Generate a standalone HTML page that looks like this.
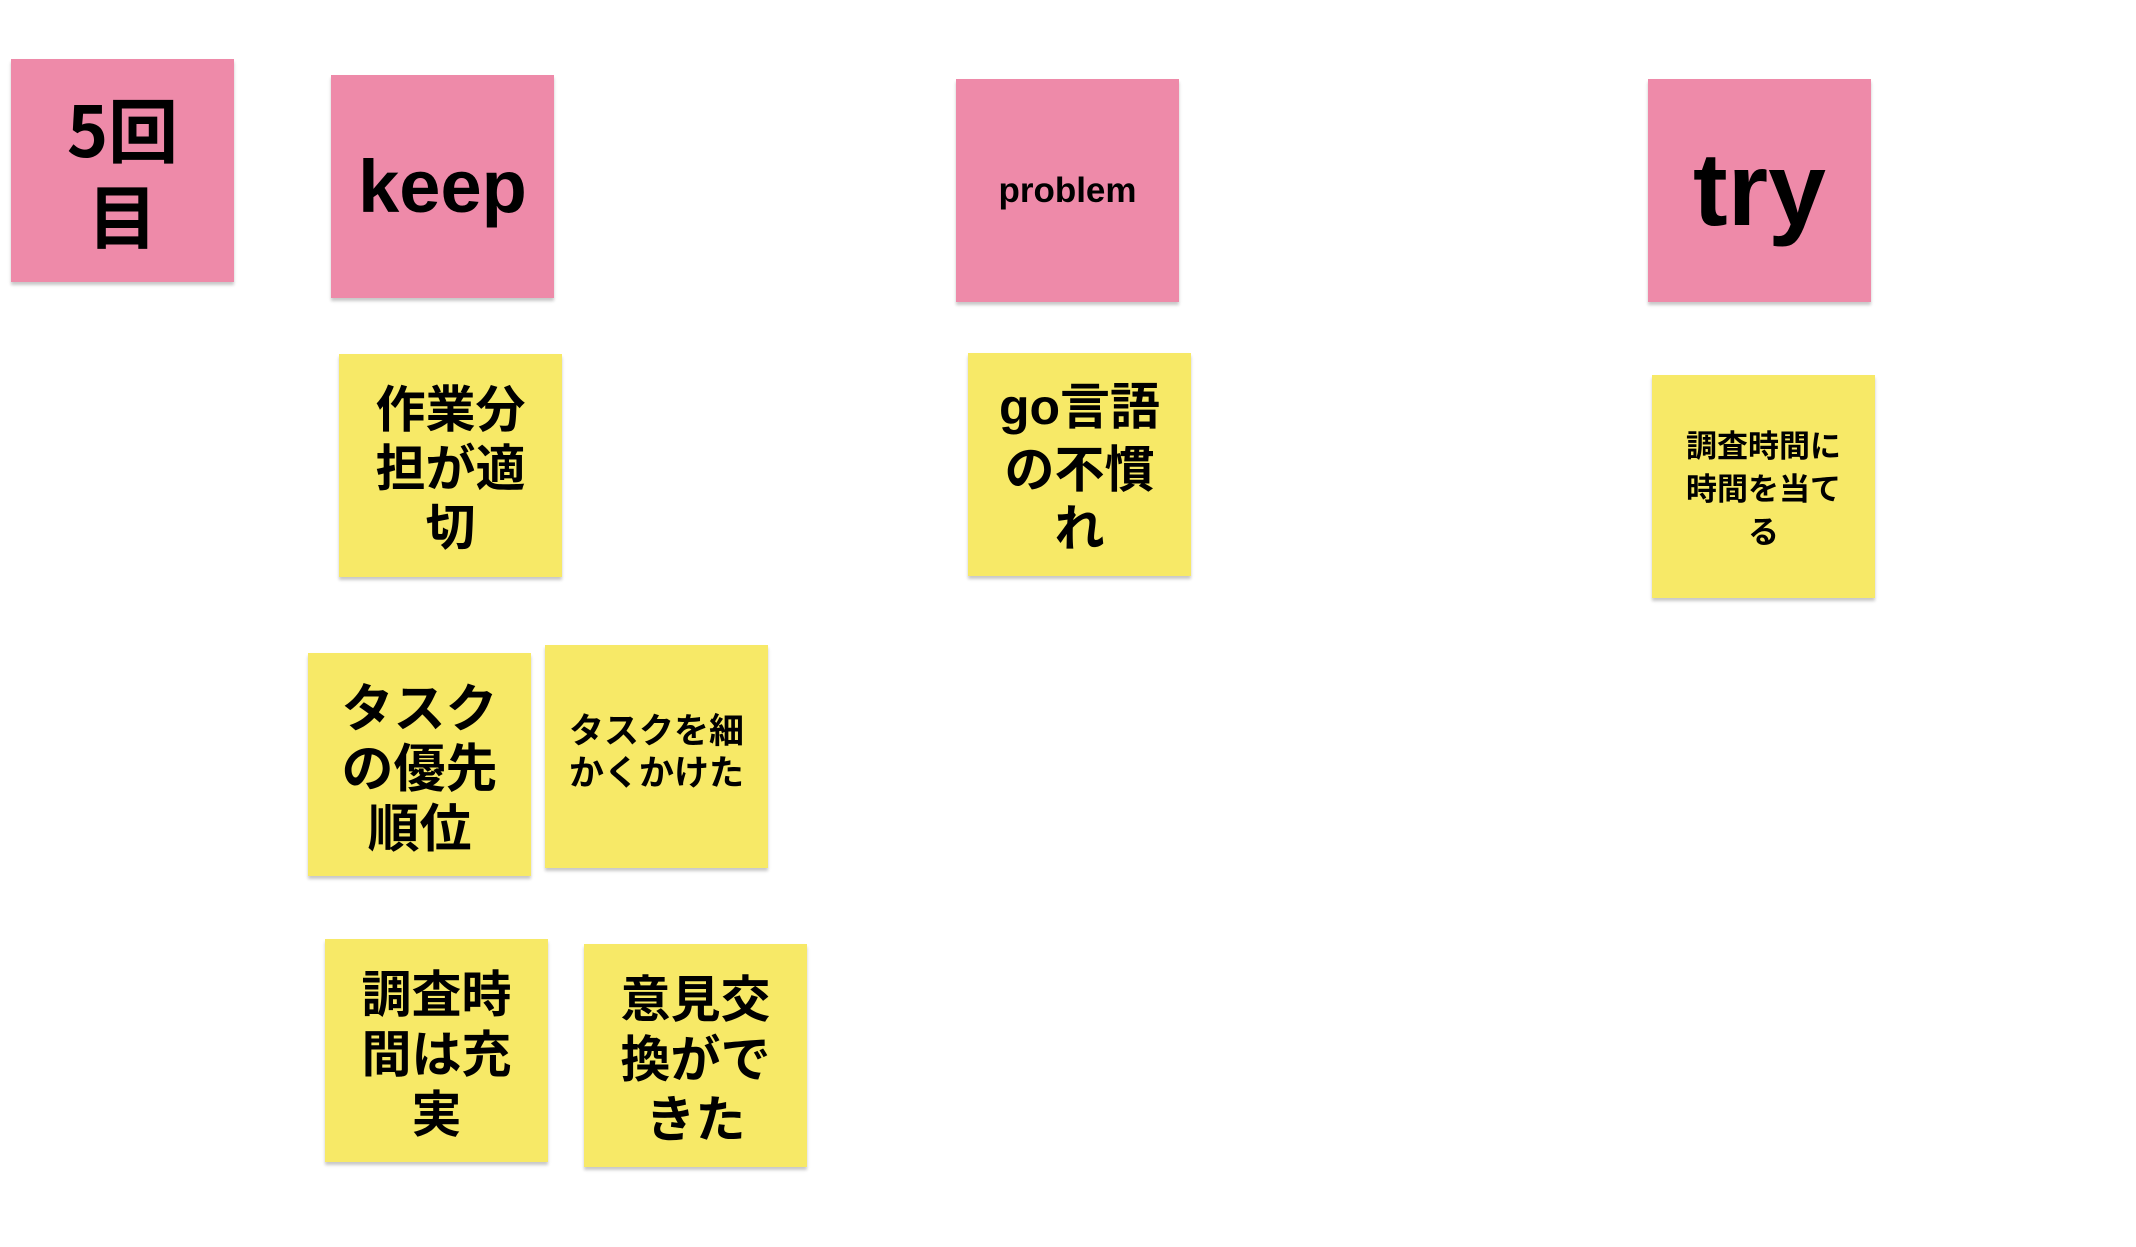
<!DOCTYPE html>
<html><head><meta charset="utf-8"><style>
html,body{margin:0;padding:0;background:#fff;width:2136px;height:1247px;overflow:hidden;}
.n{position:absolute;width:223px;height:223px;display:flex;align-items:center;justify-content:center;text-align:center;
font-family:"Liberation Sans","Noto Sans CJK JP",sans-serif;font-weight:700;color:#000;box-shadow:0 3px 3px rgba(0,0,0,0.22);box-sizing:border-box;padding:0 6px;}
.p{background:#ee8aa9;}
.y{background:#f7e967;}
.j{font-family:"Noto Sans CJK JP","Liberation Sans",sans-serif;}
</style></head><body>
<div class="n p j" style="left:11px;top:59px;font-size:70px;line-height:86px;">5回<br>目</div>
<div class="n p" style="left:331px;top:75px;font-size:74px;">keep</div>
<div class="n p" style="left:956px;top:79px;font-size:35px;">problem</div>
<div class="n p" style="left:1648px;top:79px;font-size:104px;">try</div>
<div class="n y j" style="left:339px;top:354px;font-size:50px;line-height:59px;">作業分<br>担が適<br>切</div>
<div class="n y j" style="left:968px;top:353px;font-size:50px;line-height:59px;"><span><span style="font-family:'Liberation Sans',sans-serif">go</span>言語<br>の不慣<br>れ</span></div>
<div class="n y j" style="left:1652px;top:375px;font-size:31px;line-height:43px;">調査時間に<br>時間を当て<br>る</div>
<div class="n y j" style="left:308px;top:653px;font-size:52px;line-height:60px;">タスク<br>の優先<br>順位</div>
<div class="n y j" style="left:545px;top:645px;font-size:35px;line-height:42px;padding-bottom:14px;">タスクを細<br>かくかけた</div>
<div class="n y j" style="left:325px;top:939px;font-size:50px;line-height:60px;">調査時<br>間は充<br>実</div>
<div class="n y j" style="left:584px;top:944px;font-size:50px;line-height:60px;">意見交<br>換がで<br>きた</div>
</body></html>
